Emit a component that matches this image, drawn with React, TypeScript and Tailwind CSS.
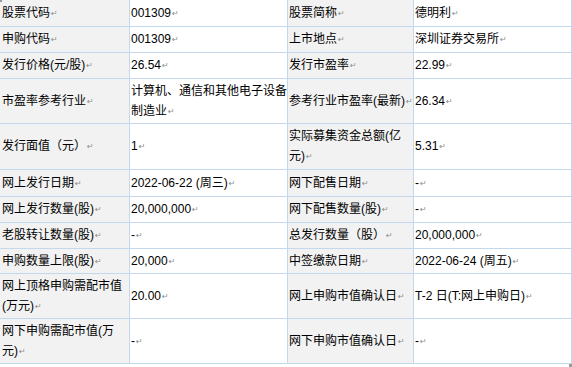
import React from 'react'

type Row = {
  h: string
  label1: React.ReactNode
  value1: React.ReactNode
  label2: React.ReactNode
  value2: React.ReactNode
}

// paragraph mark, as in a pasted Word table
const Ret = () => (
  <span className="ml-[1px] align-[1px] font-['DejaVu_Sans',sans-serif] text-[8px] text-[#8c8c8c]">↵</span>
)

const rows: Row[] = [
  { h: 'h-[27px]', label1: '股票代码', value1: '001309', label2: '股票简称', value2: '德明利' },
  { h: 'h-[26px]', label1: '申购代码', value1: '001309', label2: '上市地点', value2: '深圳证券交易所' },
  { h: 'h-[26px]', label1: '发行价格(元/股)', value1: '26.54', label2: '发行市盈率', value2: '22.99' },
  {
    h: 'h-[45px]',
    label1: '市盈率参考行业',
    value1: (
      <>
        计算机、通信和其他电子设备
        <br />
        制造业
      </>
    ),
    label2: '参考行业市盈率(最新)',
    value2: '26.34',
  },
  {
    h: 'h-[46px]',
    label1: '发行面值（元）',
    value1: '1',
    label2: (
      <>
        实际募集资金总额(亿
        <br />
        元)
      </>
    ),
    value2: '5.31',
  },
  { h: 'h-[27px]', label1: '网上发行日期', value1: '2022-06-22 (周三)', label2: '网下配售日期', value2: '-' },
  { h: 'h-[26px]', label1: '网上发行数量(股)', value1: '20,000,000', label2: '网下配售数量(股)', value2: '-' },
  { h: 'h-[26px]', label1: '老股转让数量(股)', value1: '-', label2: '总发行数量（股）', value2: '20,000,000' },
  { h: 'h-[25px]', label1: '申购数量上限(股)', value1: '20,000', label2: '中签缴款日期', value2: '2022-06-24 (周五)' },
  {
    h: 'h-[45px]',
    label1: (
      <>
        网上顶格申购需配市值
        <br />
        (万元)
      </>
    ),
    value1: '20.00',
    label2: '网上申购市值确认日',
    value2: 'T-2 日(T:网上申购日)',
  },
  {
    h: 'h-[45px]',
    label1: (
      <>
        网下申购需配市值(万
        <br />
        元)
      </>
    ),
    value1: '-',
    label2: '网下申购市值确认日',
    value2: '-',
  },
]

export default function App() {
  return (
    <div className="relative h-[367px] w-[572px] overflow-hidden bg-white font-['Liberation_Sans','Noto_Sans_CJK_SC',sans-serif] text-[12px] leading-[20px] text-black">
      <div className="flex w-[572px] flex-col">
        {rows.map((r, i) => (
          <div key={i} className={`flex border-b border-[#c3d8ec] ${r.h}`}>
            <div className="flex w-[130px] items-center border-r border-[#c3d8ec] bg-[#f2f2f2] pl-[2px]">
              <div>
                {r.label1}
                <Ret />
              </div>
            </div>
            <div className="flex w-[158px] items-center border-r border-[#c3d8ec] pl-[1px]">
              <div>
                {r.value1}
                <Ret />
              </div>
            </div>
            <div className="flex w-[126px] items-center border-r border-[#c3d8ec] bg-[#f2f2f2] pl-[1px]">
              <div>
                {r.label2}
                <Ret />
              </div>
            </div>
            <div className="flex w-[158px] items-center border-r border-[#c3d8ec] pl-[1px]">
              <div>
                {r.value2}
                <Ret />
              </div>
            </div>
          </div>
        ))}
      </div>

      {/* table handles */}
      <div className="absolute left-0 top-0 h-[2px] w-[2px] bg-[#9a9a9a]" />
      <div className="absolute left-[569px] top-[364px] h-[3px] w-[3px] bg-[#9a9a9a]" />
    </div>
  )
}
